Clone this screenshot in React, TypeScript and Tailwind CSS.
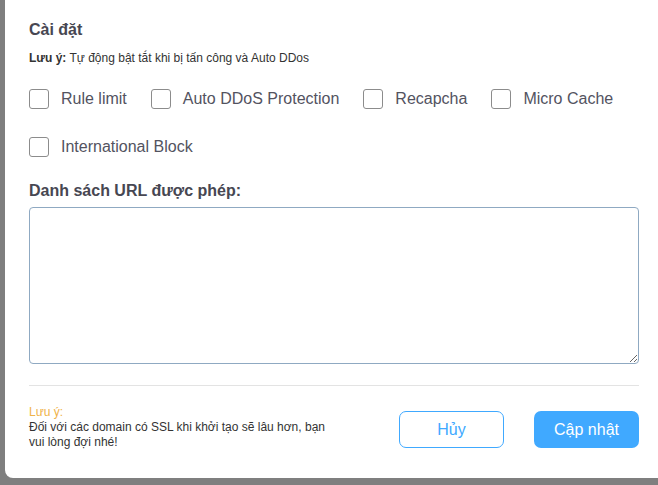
import { useState } from "react";

const options = [
  "Rule limit",
  "Auto DDoS Protection",
  "Recapcha",
  "Micro Cache",
  "International Block",
];

function Checkbox({ label }: { label: string }) {
  const [checked, setChecked] = useState(false);
  return (
    <label className="flex h-6 cursor-pointer items-center gap-3">
      <span
        onClick={() => setChecked(!checked)}
        className={`block h-5 w-5 rounded-[3px] border ${checked ? "border-[#40a9ff] bg-[#40a9ff]" : "border-[#8c8c8c] bg-white"}`}
      ></span>
      <span className="text-base text-[#53535f]">{label}</span>
    </label>
  );
}

export default function App() {
  return (
    <div className="h-[485px] w-[658px] overflow-hidden bg-[#7f7f7f] font-['Liberation_Sans',Arial,sans-serif]">
      <div className="ml-[5px] w-[653px] rounded-bl-lg bg-white pb-7 pl-6 pr-[19px] pt-5">
        <h2 className="text-base font-bold leading-5 text-[#474752]">Cài đặt</h2>
        <p className="mt-[10px] text-xs leading-4 text-[#333]">
          <span className="font-bold">Lưu ý:</span> Tự động bật tắt khi bị tấn công và Auto DDos
        </p>

        <div className="mt-[21px] flex flex-wrap gap-x-6 gap-y-6">
          {options.map((o) => (
            <Checkbox key={o} label={o} />
          ))}
        </div>

        <h3 className="mt-[22px] text-base font-bold leading-5 text-[#474752]">
          Danh sách URL được phép:
        </h3>
        <textarea className="mt-[6px] block h-[157px] w-full resize-y rounded border border-[#8fa9c2] p-2 text-sm outline-none"></textarea>

        <div className="mt-[21px] h-px bg-[#e3e3e3]"></div>

        <div className="mt-[19px] flex items-start justify-between">
          <div className="w-[302px] text-xs leading-[15px] text-[#333]">
            <div className="text-[#efb34a]">Lưu ý:</div>
            <div>Đối với các domain có SSL khi khởi tạo sẽ lâu hơn, bạn vui lòng đợi nhé!</div>
          </div>
          <div className="mt-[6px] flex gap-[30px]">
            <button className="h-[37px] w-[105px] rounded-[7px] border border-[#40a9ff] bg-white text-base text-[#40a9ff]">
              Hủy
            </button>
            <button className="h-[37px] w-[105px] rounded-[7px] bg-[#40a9ff] text-base text-white">
              Cập nhật
            </button>
          </div>
        </div>
      </div>
    </div>
  );
}
